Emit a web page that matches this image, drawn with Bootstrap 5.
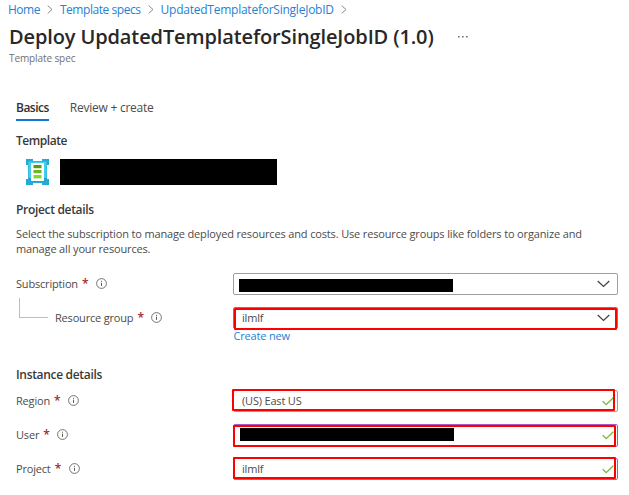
<!DOCTYPE html>
<html lang="en">
<head>
<meta charset="utf-8">
<meta name="viewport" content="width=device-width, initial-scale=1">
<title>Deploy UpdatedTemplateforSingleJobID (1.0)</title>
<link href="https://cdn.jsdelivr.net/npm/bootstrap@5.3.0/dist/css/bootstrap.min.css" rel="stylesheet">
<style>
body{font-family:"Open Sans","Noto Sans",sans-serif;font-size:11px;line-height:15px;letter-spacing:-.18px;color:#4c4b4a;overflow:hidden}
a{color:#2581d6;text-decoration:none}
svg{display:block;flex:none}
.crumbs{height:18px;padding-left:8px;font-size:12px}
.c1{letter-spacing:-.5px}
.c2{letter-spacing:-.45px}
.c3{letter-spacing:-.24px}
.crumbs svg{margin:0 7px}
.title-row{height:38px;padding-left:9px}
.title-row h1{font-size:20px;line-height:28px;font-weight:600;color:#292827;letter-spacing:-.12px}
.subtitle{height:15px;margin-top:-5px;padding-left:9px;font-size:10px;letter-spacing:-.1px;color:#706f6e}
.main{padding-left:16px}
.tabs{height:22px;margin-top:33px;gap:21px;font-size:12px;line-height:17px;letter-spacing:-.25px}
.tabs .tab-on{font-weight:600;letter-spacing:-.5px;color:#323130;border-bottom:2px solid #0f78d4}
.section{font-size:12px;font-weight:600;letter-spacing:-.32px;color:#3a3938;height:16px;line-height:16px}
.tpl-head{margin-top:12px;letter-spacing:-.45px}
.redact{background:#000}
.tpl{height:26px;margin-top:10px;padding-left:9px}
.tpl .redact{width:217px;height:26px;margin-left:10px}
.proj{margin-top:17px}
.intro{margin-top:8px;letter-spacing:-.15px}
.line{height:22px}
.lab{width:217px;flex:none;height:20px}
.req{color:#a4262c;font-size:12px;margin-left:4px;font-weight:600;width:6px}
.lab svg{margin-left:8px}
.box{width:385px;height:22px;border:1px solid #a19f9d;border-radius:2px;position:relative;padding:0 7px 0 8px}
.box.edit{border-color:#a55bc0}
.box .redact{width:214px;height:13px}
.box span{margin-top:-2px}
.ring{position:absolute;border:2px solid #f00;border-radius:1px;height:22px;width:383px}
.elbow{width:29px;height:20px;border:solid #bebdbc;border-width:0 0 1px 1px;margin-left:3px;margin-top:-21px;transform:translateY(1px)}
.sub{margin-top:17px}
.sub .box{padding-left:5px}
.sub .redact{margin-top:2px}
.rg{margin-top:12px}
.rgl{margin-left:7px}
.r1{left:0;top:0}
.create{margin:-1px 0 0 217.5px}
.inst{margin-top:24px}
.reg{margin-top:7px}
.r2{left:-2px;top:-2px}
.usr{margin-top:12px}
.usr .box{padding-left:6px;height:23px}
.r3{left:-1px;top:0}
.usr .redact{margin-bottom:2px}
.prj{margin-top:12px}
.r4{left:-1px;top:-2px}
.usr .lab,.prj .lab{height:21px}
.tk{margin-right:-4px}
</style>
<script src="https://cdn.jsdelivr.net/npm/bootstrap@5.3.0/dist/js/bootstrap.bundle.min.js"></script>
</head>
<body class="bg-white">
<svg class="d-none">
  <symbol id="info" viewBox="0 0 11 11"><circle cx="5.5" cy="5.5" r="4.9" fill="none" stroke="#656463" stroke-width=".9"/><path d="M5.5 4.7v3.2M5.5 2.8v1" stroke="#605e5c" stroke-width="1"/></symbol>
  <symbol id="sep" viewBox="0 0 6 9"><path d="M.7.6 5 4.5.7 8.4" fill="none" stroke="#8a8988" stroke-width="1"/></symbol>
  <symbol id="down" viewBox="0 0 13 8"><path d="M.7 1 6.5 6.4 12.3 1" fill="none" stroke="#454443" stroke-width="1.3"/></symbol>
  <symbol id="tick" viewBox="0 0 12 9"><path d="M.7 4.2 4.2 7.7 11.3.8" fill="none" stroke="#76b83d" stroke-width="1.3"/></symbol>
</svg>
<nav class="crumbs d-flex align-items-center">
  <a href="#" class="c1">Home</a><svg width="6" height="9"><use href="#sep"/></svg>
  <a href="#" class="c2">Template specs</a><svg width="6" height="9"><use href="#sep"/></svg>
  <a href="#" class="c3">UpdatedTemplateforSingleJobID</a><svg width="6" height="9"><use href="#sep"/></svg>
</nav>
<header>
  <div class="title-row d-flex align-items-center">
    <h1 class="m-0 text-nowrap">Deploy UpdatedTemplateforSingleJobID (1.0)</h1>
    <svg width="10" height="2" class="ms-4" fill="#706f6e"><path d="M0 0h1.6v1.5H0zM4 0h1.6v1.5H4zM8 0h1.6v1.5H8z"/></svg>
  </div>
  <div class="subtitle">Template spec</div>
</header>
<main class="main">
  <div class="tabs d-flex"><div class="tab-on">Basics</div><div class="tab-off">Review + create</div></div>
  <h2 class="section tpl-head mb-0">Template</h2>
  <div class="tpl d-flex align-items-center">
    <svg width="25" height="28" viewBox="0 0 25 28">
      <path d="M1 1h7v2h9V1h7v6h-2v14h2v6h-7v-2H8v2H1v-6h2V7H1z" fill="#24abd2"/>
      <path d="M3.5 3.5h18v21h-18z" fill="#45cdef"/><path d="M3.5 20h18v4.5h-18z" fill="#249fd2"/>
      <path d="M6 5h13v18H6z" fill="#fff"/>
      <path d="M8.5 7h8v3.2h-8z" fill="#589a16"/><path d="M8.5 12h8v3.2h-8z" fill="#6cb822"/><path d="M8.5 17h8v3.4h-8z" fill="#82d82e"/>
    </svg>
    <div class="redact"></div>
  </div>
  <h2 class="section proj mb-0">Project details</h2>
  <p class="intro mb-0">Select the subscription to manage deployed resources and costs. Use resource groups like folders to organize and<br>manage all your resources.</p>
  <div class="line sub d-flex">
    <div class="lab d-flex align-items-center"><span>Subscription</span><span class="req">*</span><svg width="11" height="11"><use href="#info"/></svg></div>
    <div class="box d-flex align-items-center"><div class="redact"></div><svg class="ms-auto" width="13" height="8"><use href="#down"/></svg></div>
  </div>
  <div class="line rg d-flex">
    <div class="lab d-flex align-items-center"><div class="elbow"></div><span class="rgl">Resource group</span><span class="req">*</span><svg width="11" height="11"><use href="#info"/></svg></div>
    <div class="box edit d-flex align-items-center"><span>ilmlf</span><svg class="ms-auto" width="13" height="8"><use href="#down"/></svg><div class="ring r1"></div></div>
  </div>
  <div class="create"><a href="#">Create new</a></div>
  <h2 class="section inst mb-0">Instance details</h2>
  <div class="line reg d-flex">
    <div class="lab d-flex align-items-center"><span>Region</span><span class="req">*</span><svg width="11" height="11"><use href="#info"/></svg></div>
    <div class="box d-flex align-items-center"><span>(US) East US</span><svg class="ms-auto tk" width="12" height="9"><use href="#tick"/></svg><div class="ring r2"></div></div>
  </div>
  <div class="line usr d-flex">
    <div class="lab d-flex align-items-center"><span>User</span><span class="req">*</span><svg width="11" height="11"><use href="#info"/></svg></div>
    <div class="box edit d-flex align-items-center"><div class="redact"></div><svg class="ms-auto tk" width="12" height="9"><use href="#tick"/></svg><div class="ring r3"></div></div>
  </div>
  <div class="line prj d-flex">
    <div class="lab d-flex align-items-center"><span>Project</span><span class="req">*</span><svg width="11" height="11"><use href="#info"/></svg></div>
    <div class="box edit d-flex align-items-center"><span>ilmlf</span><svg class="ms-auto tk" width="12" height="9"><use href="#tick"/></svg><div class="ring r4"></div></div>
  </div>
</main>
</body>
</html>
